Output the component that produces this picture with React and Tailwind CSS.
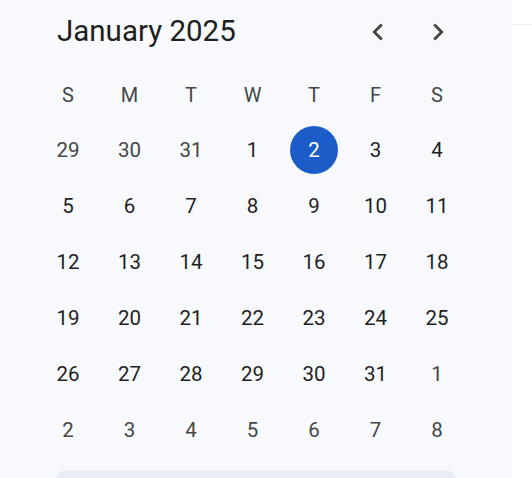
import React from 'react';

const WEEKDAYS = ['S', 'M', 'T', 'W', 'T', 'F', 'S'];

// 6 weeks shown, outside-month days flagged
const buildDays = () => {
  const days = [];
  [29, 30, 31].forEach((d) => days.push({ d, out: true }));
  for (let d = 1; d <= 31; d++) days.push({ d, out: false });
  for (let d = 1; days.length < 42; d++) days.push({ d, out: true });
  return days;
};

const ChevronLeft = () => (
  <svg viewBox="0 0 24 24" className="w-[34px] h-[34px]" fill="#444746">
    <path d="M15.41 7.41L14 6l-6 6 6 6 1.41-1.41L10.83 12z" />
  </svg>
);

const ChevronRight = () => (
  <svg viewBox="0 0 24 24" className="w-[34px] h-[34px]" fill="#444746">
    <path d="M8.59 16.59L10 18l6-6-6-6-1.41 1.41L13.17 12z" />
  </svg>
);

export default function App() {
  const days = buildDays();
  const selected = 2;

  return (
    <div className="flex min-h-screen bg-white" style={{ fontFamily: 'Roboto, "Noto Sans", sans-serif' }}>
      <div className="w-[512px] h-[478px] overflow-hidden bg-[#f8f9fd]">
        {/* 헤더 */}
        <div className="h-[64px] flex items-center justify-between pl-[57px] pr-[57px]">
          <div className="text-[29.5px] leading-none text-[#1f1f1f]">January 2025</div>
          <div className="flex items-center gap-[26px]">
            <button className="w-[34px] h-[34px] flex items-center justify-center">
              <ChevronLeft />
            </button>
            <button className="w-[34px] h-[34px] flex items-center justify-center">
              <ChevronRight />
            </button>
          </div>
        </div>

        {/* 요일 */}
        <div className="mt-[7px] ml-[44px] grid grid-cols-[repeat(7,48px)] gap-x-[13.5px] h-[48px]">
          {WEEKDAYS.map((w, i) => (
            <div key={i} className="flex items-center justify-center text-[20px] text-[#444746]">
              {w}
            </div>
          ))}
        </div>

        {/* 날짜 */}
        <div className="mt-[7px] ml-[44px] grid grid-cols-[repeat(7,48px)] auto-rows-[48px] gap-x-[13.5px] gap-y-[8px]">
          {days.map((day, i) => {
            const isSel = !day.out && day.d === selected;
            return (
              <div
                key={i}
                className={
                  isSel
                    ? 'flex items-center justify-center rounded-full bg-[#1c5cc8] text-white text-[20.5px]'
                    : day.out
                    ? 'flex items-center justify-center text-[20.5px] text-[#444746]'
                    : 'flex items-center justify-center text-[20.5px] text-[#1f1f1f]'
                }
              >
                {day.d}
              </div>
            );
          })}
        </div>

        <div className="mt-[16px] ml-[56px] w-[400px] h-[40px] rounded-t-[10px] bg-[#e9eef6]" />
      </div>
      <div className="flex-1 pt-[24px]">
        <div className="border-t border-[#f0f0f0]" />
      </div>
    </div>
  );
}
